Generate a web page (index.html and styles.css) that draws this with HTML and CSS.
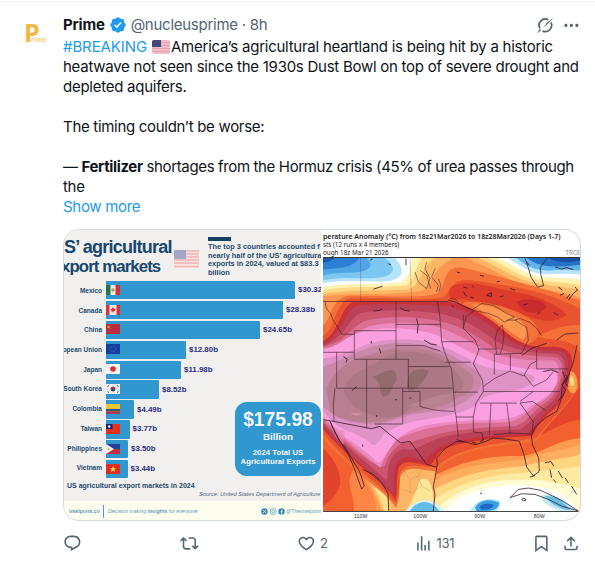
FILE: index.html
```html
<!DOCTYPE html>
<html lang="en">
<head>
    <meta charset="UTF-8">
    <meta name="viewport" content="width=device-width, initial-scale=1.0">
    <title>Prime on X</title>
    <link rel="stylesheet" href="styles.css">
</head>
<body>
    <article class="tweet">
        <div class="avatar"><span class="avatar-p">P</span><span class="avatar-rest">rime</span></div>
        <div class="tweet-main">
            <header class="tweet-header">
                <span class="name">Prime</span>
                <svg class="verified" viewBox="0 0 22 22"><path d="M20.396 11c-.018-.646-.215-1.275-.57-1.816-.354-.54-.852-.972-1.438-1.246.223-.607.27-1.264.14-1.897-.131-.634-.437-1.218-.882-1.687-.47-.445-1.053-.75-1.687-.882-.633-.13-1.29-.083-1.897.14-.273-.587-.704-1.086-1.245-1.44S11.647 1.62 11 1.604c-.646.017-1.273.213-1.813.568s-.969.854-1.24 1.44c-.608-.223-1.267-.272-1.902-.14-.635.13-1.22.436-1.69.882-.445.47-.749 1.055-.878 1.688-.13.633-.08 1.29.144 1.896-.587.274-1.087.705-1.443 1.245-.356.54-.555 1.17-.574 1.817.02.647.218 1.276.574 1.817.356.54.856.972 1.443 1.245-.224.606-.274 1.263-.144 1.896.13.634.433 1.218.877 1.688.47.443 1.054.747 1.687.878.633.132 1.29.084 1.897-.136.274.586.705 1.084 1.246 1.439.54.354 1.17.551 1.816.569.647-.016 1.276-.213 1.817-.567s.972-.854 1.245-1.44c.604.239 1.266.296 1.903.164.636-.132 1.22-.447 1.68-.907.46-.46.776-1.044.908-1.681s.075-1.299-.165-1.903c.586-.274 1.084-.705 1.439-1.246.354-.54.551-1.17.569-1.816zM9.662 14.85l-3.429-3.428 1.293-1.302 2.072 2.072 4.4-4.794 1.347 1.246z"/></svg>
                <span class="handle">@nucleusprime · 8h</span>
                <span class="header-actions">
                    <svg class="icon grok" viewBox="0 0 24 24"><path d="M15.8 4.9A8 8 0 0 0 5 15.8M8.300 19.100A8 8 0 0 0 19 8.200"/><path class="slash" d="M22.500 1.500L15.500 9.800 9 14.700 14.600 8.300zM1.500 22.500L4.700 16.500 6.800 18z"/></svg>
                    <svg class="icon" viewBox="0 0 24 24"><path d="M3 12c0-1.1.9-2 2-2s2 .9 2 2-.9 2-2 2-2-.9-2-2zm9 2c1.1 0 2-.9 2-2s-.9-2-2-2-2 .9-2 2 .9 2 2 2zm7 0c1.1 0 2-.9 2-2s-.9-2-2-2-2 .9-2 2 .9 2 2 2z"/></svg>
                </span>
            </header>

            <div class="tweet-text">
                <p class="lead"><a class="link">#BREAKING</a> <svg class="flag-emoji" viewBox="0 0 18 14"><rect width="18" height="14" rx="2" fill="#f3bcc6"/><path d="M0 2.500h18M0 5.500h18M0 8.500h18M0 11.500h18" stroke="#e2a3b2" stroke-width="1"/><path d="M2 0h7v7H0V2a2 2 0 0 1 2-2z" fill="#44487f"/></svg>America’s agricultural heartland is being hit by a historic</p>
                <p class="wide">heatwave not seen since the 1930s Dust Bowl on top of severe drought and</p>
                <p class="wide">depleted aquifers.</p>
                <br>
                <p>The timing couldn’t be worse:</p>
                <br>
                <p class="tight">— <b>Fertilizer</b> shortages from the Hormuz crisis (45% of urea passes through</p>
                <p>the</p>
                <p><a class="link">Show more</a></p>
            </div>

            <div class="media">
                <section class="chart">
                    <div class="chart-head">
                        <h2>S’ agricultural<span>xport markets</span></h2>
                        <svg class="chart-flag" viewBox="0 0 25 18"><rect width="25" height="18" fill="#f4e3e1"/><path d="M0 1h25M0 4h25M0 7h25M0 10h25M0 13h25M0 16.500h25" stroke="#efb5b3" stroke-width="1.300"/><rect width="12" height="9" fill="#a7a5c5"/></svg>
                        <div class="chart-note">The top 3 countries accounted f<br>nearly half of the US’ agricultura<br>exports in 2024, valued at $83.3<br>billion</div>
                    </div>

                    <div class="chart-body">
                        <div class="labels">
                            <span>Mexico</span>
                            <span>Canada</span>
                            <span>China</span>
                            <span>opean Union</span>
                            <span>Japan</span>
                            <span>South Korea</span>
                            <span>Colombia</span>
                            <span>Taiwan</span>
                            <span>Philippines</span>
                            <span>Vietnam</span>
                        </div>
                        <div class="bars">
                            <div class="row"><div class="bar" style="width: 189px"><svg viewBox="0 0 14 10"><rect width="14" height="10" fill="#eee"/><rect width="4.500" height="10" fill="#26734d"/><rect x="9.500" width="4.500" height="10" fill="#cf3339"/><circle cx="7" cy="5" r="1.700" fill="#a89565"/></svg></div>$30.32</div>
                            <div class="row"><div class="bar" style="width: 177px"><svg viewBox="0 0 14 10"><rect width="14" height="10" fill="#f6eeee"/><path d="M0 0h3.500v10H0zM10.500 0H14v10h-3.500zM7 2l1 1.500 1.500.5-1 2.500H7.300V8h-.6V6.500H5.500l-1-2.500L6 3.500z" fill="#db3236"/></svg></div>$28.38b</div>
                            <div class="row"><div class="bar" style="width: 154px"><svg viewBox="0 0 14 10"><rect width="14" height="10" fill="#b92d3d"/><circle cx="2.500" cy="3" r="1.200" fill="#d8a145"/><circle cx="5" cy="2" r=".4" fill="#d8a145"/><circle cx="5" cy="4.500" r=".4" fill="#d8a145"/></svg></div>$24.65b</div>
                            <div class="row"><div class="bar" style="width: 80px"><svg viewBox="0 0 14 10"><rect width="14" height="10" fill="#12409f"/><circle cx="7" cy="5" r="2.800" fill="none" stroke="#59719a" stroke-width=".8" stroke-dasharray="1 .6"/></svg></div>$12.80b</div>
                            <div class="row"><div class="bar" style="width: 75px"><svg viewBox="0 0 14 10"><rect width="14" height="10" fill="#f8f5f4"/><circle cx="7" cy="5" r="2.800" fill="#df2f31"/></svg></div>$11.98b</div>
                            <div class="row"><div class="bar" style="width: 53px"><svg viewBox="0 0 14 10"><rect width="14" height="10" fill="#eee"/><path d="M4.500 5a2.500 2.500 0 0 1 5 0z" fill="#b42f45"/><path d="M4.500 5a2.500 2.500 0 0 0 5 0z" fill="#27457f"/><path d="M1.500 2.500L3 1.500M11 1.500l1.500 1M1.500 7.500l1.500 1M11 8.500l1.500-1" stroke="#555"/></svg></div>$8.52b</div>
                            <div class="row"><div class="bar" style="width: 28px"><svg viewBox="0 0 14 10"><rect width="14" height="10" fill="#e9c634"/><rect y="5" width="14" height="2.500" fill="#44507c"/><rect y="7.500" width="14" height="2.500" fill="#a53b50"/></svg></div>$4.49b</div>
                            <div class="row"><div class="bar" style="width: 23.500px"><svg viewBox="0 0 14 10"><rect width="14" height="10" fill="#e5301e"/><rect width="6.500" height="5" fill="#19216f"/><circle cx="3.200" cy="2.500" r="1.200" fill="#fff"/></svg></div>$3.77b</div>
                            <div class="row"><div class="bar" style="width: 22px"><svg viewBox="0 0 14 10"><rect width="14" height="5" fill="#2b3d9e"/><rect y="5" width="14" height="5" fill="#c32b3f"/><path d="M0 0l8 5-8 5z" fill="#f5f2ea"/><circle cx="2.700" cy="5" r="1" fill="#e4bd4a"/></svg></div>$3.50b</div>
                            <div class="row"><div class="bar" style="width: 21.500px"><svg viewBox="0 0 14 10"><rect width="14" height="10" fill="#dc2f22"/><path d="M7 2l.8 2.200h2.300L8.300 5.600 9 8 7 6.600 5 8l.7-2.400-1.800-1.400h2.300z" fill="#f6e34b"/></svg></div>$3.44b</div>
                        </div>
                        <div class="total">
                            <strong>$175.98</strong>
                            <em>Billion</em>
                            <span>2024 Total US<br>Agricultural Exports</span>
                        </div>
                    </div>

                    <div class="chart-caption">US agricultural export markets in 2024</div>
                    <div class="chart-source">Source: United States Department of Agriculture</div>
                    <footer class="chart-foot">
                        <span class="brand">intelpoint.co</span>
                        <span class="motto">Decision making <b>insights</b> for everyone</span>
                        <svg class="socials" viewBox="0 0 24 7"><circle cx="3.500" cy="3.500" r="3.200" fill="#2c85b5"/><path d="M2 2l3 3M5 2L2 5" stroke="#fff" stroke-width=".8"/><rect x="9.500" y=".8" width="5.400" height="5.400" rx="1.500" fill="none" stroke="#6daecb" stroke-width=".9"/><circle cx="12.200" cy="3.500" r="1.300" fill="none" stroke="#6daecb" stroke-width=".8"/><circle cx="20.500" cy="3.500" r="3.200" fill="#2c85b5"/><path d="M21.800 2h-.6q-.6 0-.6.700V6.700M19.500 3.700h2" stroke="#fff" stroke-width=".8" fill="none"/></svg>
                        <span class="social-name">@Theintelpoint</span>
                    </footer>
                </section>

                <section class="forecast">
                    <div class="forecast-head">
                        <div class="forecast-title">perature Anomaly (°C) from 18z21Mar2026 to 18z28Mar2026 (Days 1-7)</div>
                        <div class="forecast-sub">sts (12 runs x 4 members)</div>
                        <div class="forecast-sub last"><span>ough 18z Mar 21 2026</span><span class="source">TROI</span></div>
                    </div>
                    <svg class="map" viewBox="9 98 771 762" preserveAspectRatio="none">
                        <rect x="9" y="98" width="771" height="762" fill="#fc9650"/>

                        <!-- cold air, north west -->
                        <path fill="#fdb566" d="M9 213C100 202 200 212 300 198C350 180 320 140 400 98H9z"/>
                        <path fill="#fed884" d="M9 206C90 192 180 200 268 192C310 170 300 130 345 98H9z"/>
                        <path fill="#fff3b4" d="M9 195C90 180 180 190 260 180C285 160 285 130 305 98H9z"/>
                        <path fill="#fff" d="M9 185C90 170 180 180 240 172C272 155 270 130 276 98H9z"/>
                        <path fill="#b5e3fa" d="M9 174C80 160 150 172 205 168C245 160 262 140 225 98H9z"/>
                        <path fill="#7cc6f2" d="M9 165C80 150 130 165 190 155C230 145 225 120 195 98H9z"/>
                        <path fill="#4fa5e8" d="M9 150C50 140 90 145 130 138C165 125 150 110 140 98H9z"/>
                        <path fill="#2c7fd2" d="M9 133C50 128 100 130 118 98H9z"/>
                        <path fill="#1b58b1" d="M9 112Q30 110 45 98H9z"/>

                        <!-- cold air, north east -->
                        <path fill="#fdb566" d="M440 98C520 130 560 165 620 180C680 198 740 200 780 218V98z"/>
                        <path fill="#fed884" d="M475 98C540 125 580 160 640 172C700 184 740 184 780 196V98z"/>
                        <path fill="#fff3b4" d="M505 98C570 128 600 155 650 164C710 172 740 170 780 180V98z"/>
                        <path fill="#fff" d="M535 98C580 120 620 148 660 154C710 160 750 156 780 164V98z"/>
                        <path fill="#b5e3fa" d="M565 98C605 125 635 144 670 146C710 148 740 142 780 148V98z"/>
                        <path fill="#5fb4ec" d="M590 98C625 130 660 138 700 135C730 132 750 133 780 136V98z"/>
                        <path fill="#2872c6" d="M622 98C650 122 690 130 780 118V98z"/>
                        <path fill="#1a4fa6" d="M685 98Q720 118 780 106V98z"/>

                        <!-- southern waters -->
                        <path fill="#fc9a50" d="M9 560H780V860H9z"/>
                        <path fill="#f4602f" d="M9 590C70 650 110 700 140 780C150 810 140 830 150 860H9z"/>
                        <path fill="#fb8545" d="M100 735C140 760 165 810 170 860H100C110 820 70 780 100 735z"/>
                        <path fill="#e2432b" d="M9 670C40 700 65 740 60 780C50 815 30 830 9 845z"/>
                        <path fill="#fdb968" d="M140 735C190 760 225 820 235 860H185C175 820 140 770 140 735z"/>
                        <path fill="#fee08d" d="M160 765C190 780 205 820 208 860H192C190 830 160 800 160 765z"/>
                        <path fill="#f2622f" d="M345 690C400 650 560 640 640 640C690 600 720 560 780 540V640C700 650 660 690 600 695C500 690 420 715 350 750z"/>
                        <path fill="#e5452c" d="M645 640C660 590 700 565 780 480V585C730 590 690 620 645 640z"/>
                        <path fill="#fdae5f" d="M342 770C420 720 520 715 610 705C680 680 730 680 780 660V860H340z"/>
                        <path fill="#fed681" d="M342 795C420 750 520 730 610 725C680 705 730 705 780 690V860H340z"/>
                        <path fill="#feeaa0" d="M342 825C420 775 500 750 610 745C680 735 730 735 780 725V860H340z"/>
                        <path fill="#fffbd3" d="M355 850C420 790 500 765 610 765C680 765 730 780 780 790V860H355z"/>
                        <path fill="#fff" d="M375 860C420 800 520 780 600 782C680 788 740 800 772 860z"/>
                        <path fill="#fdb566" d="M235 730C265 715 310 725 345 730V860H225z"/>
                        <path fill="#fee698" d="M300 765C330 755 340 780 342 860H260C275 830 290 800 300 765z"/>
                        <path fill="#d8f1f8" d="M255 860C290 820 340 815 372 860z"/>
                        <path fill="#62bdea" d="M270 860C290 825 335 825 358 860z"/>
                        <path fill="#bfe8f6" d="M450 860C470 820 510 820 540 828Q545 850 530 860z"/>
                        <path fill="#3b9fe3" d="M465 850C480 820 520 825 538 835Q535 860 500 860H470z"/>
                        <path fill="#1f68c4" d="M478 848Q495 830 522 842Q515 858 485 856z"/>
                        <path fill="#bfe8f6" d="M660 815C700 800 740 830 765 860H720C700 850 670 840 660 815z"/>
                        <path fill="#66c0e6" d="M675 815C710 810 740 840 752 858C720 855 690 840 675 815z"/>

                        <!-- heat dome, outer to inner -->
                        <path fill="#f47038" d="M9 300C35 290 30 215 90 212C200 210 290 222 350 205C385 185 360 110 440 130C520 150 640 180 780 225V480C750 540 680 600 650 650C560 665 420 660 350 740C300 740 260 715 240 760C240 800 235 840 228 850C190 790 110 760 9 640z"/>
                        <path fill="#e9532f" d="M9 335C50 305 45 225 95 218C200 216 300 228 370 216C400 190 395 160 450 165C560 180 660 190 780 250V300C720 300 680 320 650 335C720 350 780 340 780 400V480C750 530 680 600 650 640C560 655 420 660 348 728C300 730 260 705 238 750C240 790 232 830 226 838C190 780 90 730 9 625z"/>
                        <path fill="#dd3b2b" d="M400 180C440 165 500 180 560 195C640 205 720 240 740 270C700 300 640 285 600 262C540 240 450 220 395 222C385 205 385 190 400 180z"/>
                        <path fill="#c92a2d" d="M590 230C620 215 670 222 680 245C660 272 610 270 590 230z"/>
                        <path fill="#f4713a" d="M430 232C500 225 590 250 640 290C670 325 650 350 615 362C570 345 520 300 430 255z"/>
                        <path fill="#fc9650" d="M455 238C510 235 570 262 610 295C625 315 620 335 610 345C570 325 520 275 455 238z"/>
                        <path fill="#fca04f" d="M735 440C760 430 775 450 772 490C760 520 740 510 735 440z"/>
                        <path fill="#fede87" d="M748 455Q765 450 762 480Q750 495 748 455z"/>
                        <path fill="#c6313a" d="M9 350C65 315 60 238 105 229H385C440 235 500 270 550 315C590 350 630 372 700 365C745 365 765 390 752 430C748 480 735 530 690 562C660 590 645 620 635 635C560 635 420 650 375 672C340 695 345 715 330 722C290 720 260 700 238 725C225 760 235 800 226 825C190 770 100 720 9 612z"/>
                        <path fill="#bb4158" d="M9 357C75 325 75 243 120 240C200 236 300 236 385 244C440 252 500 288 545 330C590 362 640 380 700 376C740 376 748 400 742 430C738 480 728 530 685 556C650 590 635 615 620 628C540 628 420 640 370 662C335 680 325 712 300 708C270 690 240 695 225 725C215 760 226 790 222 808C180 765 100 710 9 604z"/>
                        <path fill="#cc566f" d="M9 362C85 335 85 270 130 262C200 250 300 256 370 268C430 280 480 310 530 350C590 378 650 386 700 386C730 388 738 410 732 440C728 480 715 525 670 552C640 580 620 605 600 615C520 615 430 622 360 640C310 655 290 680 262 675C235 670 220 690 208 715C200 740 205 760 200 770C170 735 100 690 9 595z"/>
                        <path fill="#dc6f95" d="M9 366C85 350 92 300 145 285C220 270 300 274 365 290C420 303 470 330 520 368C585 390 645 394 700 396C725 398 730 420 725 448C718 486 700 525 660 545C630 575 610 598 585 604C510 608 430 610 355 628C300 643 275 655 248 655C225 665 205 690 195 722C180 740 110 690 9 590z"/>
                        <path fill="#ec88c0" d="M9 370C90 358 95 325 150 303C220 288 300 290 360 308C410 325 460 355 510 384C580 404 640 408 700 410C718 412 718 435 712 460C705 495 685 525 650 538C615 570 595 588 565 592C500 596 430 592 350 606C290 618 255 632 230 645C208 670 198 690 182 730C160 712 100 670 9 582z"/>
                        <path fill="#faa0e0" d="M9 376C60 362 80 335 110 325C180 303 250 305 335 325C400 352 440 380 480 394C520 412 580 430 645 434C700 425 716 440 712 470C695 520 650 530 625 550C600 580 560 585 500 586C430 588 370 590 300 606C260 618 230 640 215 665C195 690 190 705 176 716C150 690 110 660 66 630C40 605 25 590 9 578z"/>
                        <path fill="#de92c6" d="M9 400C60 395 80 378 110 372C160 345 230 338 300 346C370 360 420 388 470 415C510 440 590 432 630 450C660 455 640 485 590 495C540 510 500 500 475 535C440 565 380 575 310 585C250 595 215 610 190 630C175 655 165 670 152 655C120 630 80 620 55 605C35 590 20 570 9 560z"/>
                        <path fill="#c988a8" d="M9 425C60 410 90 388 130 375C180 355 240 350 300 358C370 372 410 398 450 425C485 445 495 470 475 495C450 530 400 555 330 562C260 568 215 590 180 600C120 600 60 590 9 545z"/>
                        <path fill="#b97f90" d="M20 490C40 440 90 400 145 392C190 372 250 362 310 372C370 385 410 415 445 440C470 460 465 490 435 510C400 520 390 545 330 552C260 560 220 590 165 592C110 595 60 590 30 560z"/>
                        <path fill="#ad7885" d="M70 500C80 440 150 430 205 390C260 370 340 380 380 415C420 445 440 475 425 495C390 505 370 520 310 530C270 545 260 575 200 580C150 575 130 560 100 545z"/>
                        <path fill="#b98391" d="M255 545C300 530 370 500 400 510C370 540 300 545 255 545z"/>
                        <path fill="#946a6f" d="M155 455C175 455 190 435 215 435C235 440 235 465 220 480C218 500 200 520 188 515C170 490 195 480 155 455zM268 450C280 430 315 430 326 438C322 460 285 500 268 498C255 485 262 465 268 450z"/>
                        <path fill="#e58bb8" d="M590 415q60-15 115-8q10 12-20 18q-50 5-95-10zM35 605l40 15-5 40q-30-20-35-55z" opacity=".6"/>
                        <path fill="#dba0c0" d="M90 568q20-8 35 0q-10 8-35 0z" opacity=".6"/>

                        <!-- borders -->
                        <g class="borders">
                            <path d="M9 229H385M228 229V403M352 229l4 20 4 30 5 71H460M228 298H362M228 362h85l20 8 28 8M103 317H228M103 317V403H265V490M9 382H103M50 382V490M140 403V612M50 490H398M265 425H388M248 490V598H165M248 500H300V545l30 8 30 5 42 2M15 229l4 20 12 15 10 25 14 20 10 18 38 1M365 350l8 30 10 25 12 30 5 55 5 70 3 12 7 65M375 412H452M401 502H475M408 577H460M475 372H530M523 388V450M523 388L605 385M571 388V435M650 375V432H745M490 500H720M480 535H590M513 535L508 630M560 535l8 60 2 32M600 535l18 25 22 32-5 35M520 630L570 625 632 628M600 535l38-5 40 28M640 500l-40 30M430 270v40l35 35 12 30-17 42 28 50 2 33-22 35-8 42v45l26 3 3 25M490 485l35-25 46-22 40 15 20-35 19-10M612 450l28 35 40-20 20-25M45 490l-5 50 2 50"/>
                            <path class="faint" d="M122 98V229M270 98l5 131"/>
                        </g>
                        <g class="coast">
                            <path d="M9 585l31 5 115 22 25-7 30 25 32 25 28-5 50 70 30 8M340 860l5-50-5-22 12-68-2-20 25-28 35-22 30 2 10 5 18 3 30-10 22-10 40 4 38 6 14 40 8 38 20 26 18-14-2-40-18-38-4-28 12-28 32-28 32-18 12-30 5-48 20-34 14-40 10-48M30 590l15 35 18 30 22 35 18 42 22 62 8-10-14-42-24-40-20-35-15-15zM130 735l30 15 24 22 20 35 2 53M570 820l25-25 30-4 35 6 30 14 40 20 45 29-50-15-40-20-40-15-40-2zM615 98l10 30 8 28 20 30 18-5-8-30-2-25 20-28M385 225l20 5 25 12 25 12M605 392l30-22 45-15M710 345l25-18 40-3"/>
                            <path class="lakes" d="M455 255l30-20 35 5 35 22 28 14-30 15-20-15-30-12zM530 388l-5-45 8-28 14-15 5 30-5 38-7 20M560 285l25 0 35 22 5 38-20 40M585 285l15-5 30 12 20 18 15 22M430 310l8-35 25-18M285 140l10 30 25 20 10-30-15-30 5-20M300 135l20 15 12 40M345 130l-10 25 20 25-5 20M355 160l8 20-6 18M390 220l15 2 10 8"/>
                            <path class="islands" d="M675 715l18-4 8 14M690 735l5 25M715 740l12 20M735 760l10 15M755 785l15 25M700 765l8 10M630 758l15-5M160 192l15-5 12-4M430 185l12 4M500 210l14-8v12zM570 190l15 5M410 140l10 3M540 215l10-3M610 240l12-4M660 260l-8 8M700 262l14 8M740 220l10-14M620 110l8 10M205 115l8 4M150 105l8-4M258 100v20M450 215l12 4M480 150l12 3M705 125l20 6 15-4 20 6M715 185l12 10M720 210l12-5M745 225l15-20 14-12M765 185l8 10M728 440l8 22-10 18 10 16-8 18-14 14M735 450l8 6-6 20 8 10M670 440l25-5 20 8M160 258l18-2 10-5M240 248l15 8 15 2M290 280l4 20-2 25M312 345l20 12 18 3M70 395l12 8-4 10M110 485l-14 12M154 348v8M178 370l4 14M225 525h6M268 520h6M170 577v-6M605 825l8-4 5 6-8 2zM480 805l6 4M410 645l20 6M455 652l14 4M480 652l12-8M430 200l10 14M455 180l8 8M530 170l10-2M395 240l6 6M128 660v6"/>
                        </g>
                        <path class="mexico" d="M250 740l20 25 25-10 10 30-30 20-30-10M305 785l25 15M270 765v45M295 755l10-20"/>
                    </svg>
                    <div class="axis"><span>110W</span><span>100W</span><span>90W</span><span>80W</span></div>
                </section>
            </div>

            <div class="actions">
                <span class="action"><svg class="icon" viewBox="0 0 24 24"><path d="M1.751 10c0-4.42 3.584-8 8.005-8h4.366c4.49 0 8.129 3.64 8.129 8.13 0 2.96-1.607 5.68-4.196 7.11l-8.054 4.46v-3.69h-.067c-4.49.1-8.183-3.51-8.183-8.01zm8.005-6c-3.317 0-6.005 2.69-6.005 6 0 3.37 2.77 6.08 6.138 6.01l.351-.01h1.761v2.300l5.087-2.810c1.951-1.080 3.163-3.130 3.163-5.360 0-3.390-2.744-6.130-6.129-6.130H9.756z"/></svg></span>
                <span class="action"><svg class="icon" viewBox="0 0 24 24"><path d="M4.500 3.880l4.432 4.140-1.364 1.460L5.500 7.550V16c0 1.100.896 2 2 2H13v2H7.500c-2.209 0-4-1.790-4-4V7.550L1.432 9.480.068 8.020 4.500 3.880zM16.500 6H11V4h5.500c2.209 0 4 1.790 4 4v8.450l2.068-1.930 1.364 1.460-4.432 4.140-4.432-4.140 1.364-1.460 2.068 1.930V8c0-1.100-.896-2-2-2z"/></svg></span>
                <span class="action"><svg class="icon" viewBox="0 0 24 24"><path d="M16.697 5.500c-1.222-.060-2.679.510-3.890 2.160l-.805 1.090-.806-1.090C9.984 6.010 8.526 5.440 7.304 5.500c-1.243.070-2.349.780-2.910 1.910-.552 1.120-.633 2.780.479 4.820 1.074 1.970 3.257 4.270 7.129 6.610 3.870-2.340 6.052-4.640 7.126-6.610 1.111-2.040 1.030-3.700.477-4.820-.561-1.130-1.666-1.840-2.908-1.910zm4.187 7.690c-1.351 2.480-4.001 5.120-8.379 7.670l-.503.300-.504-.300c-4.379-2.550-7.029-5.190-8.382-7.670-1.360-2.500-1.410-4.860-.514-6.670.887-1.790 2.647-2.910 4.601-3.010 1.651-.090 3.368.560 4.798 2.010 1.429-1.450 3.146-2.100 4.796-2.010 1.954.100 3.714 1.220 4.601 3.010.896 1.810.846 4.170-.514 6.670z"/></svg>2</span>
                <span class="action views"><svg class="icon" viewBox="0 0 24 24"><path d="M8.750 21V3h2v18h-2zM18 21V8.500h2V21h-2zM4 21l.004-10h2L6 21H4zm9.248 0v-7h2v7h-2z"/></svg>131</span>
                <span class="action"><svg class="icon" viewBox="0 0 24 24"><path d="M4 4.500C4 3.120 5.119 2 6.500 2h11C18.881 2 20 3.120 20 4.500v18.440l-8-5.710-8 5.710V4.500zM6.500 4c-.276 0-.500.220-.500.500v14.560l6-4.290 6 4.290V4.500c0-.280-.224-.500-.500-.500h-11z"/></svg></span>
                <span class="action"><svg class="icon" viewBox="0 0 24 24"><path d="M12 2.590l5.700 5.700-1.410 1.420L13 6.410V16h-2V6.410l-3.300 3.300-1.410-1.420L12 2.590zM21 15l-.020 3.510c0 1.380-1.120 2.490-2.500 2.490H5.500C4.110 21 3 19.880 3 18.500V15h2v3.500c0 .280.220.500.500.500h12.980c.280 0 .500-.220.500-.500L19 15h2z"/></svg></span>
            </div>
        </div>
    </article>
</body>
</html>
```

FILE: styles.css
```css
body {
    margin: 0;
    background-color: #fff;
    color: #0f1419;
    font-family: Inter, "Liberation Sans", sans-serif;
    font-size: 15px;
    line-height: 20px;
}
p, h2 {
    margin: 0;
}
.tweet {
    display: flex;
    height: 549px;
    margin-top: 1px;
    padding: 13px 14px 0 16px;
    border-top: 1px solid #eff3f4;
    overflow: hidden;
}
.avatar {
    display: flex;
    align-items: flex-end;
    flex: none;
    width: 39px;
    height: 29px;
    padding-left: 8px;
    box-sizing: border-box;
    margin-right: 8px;
    color: #f3b83f;
    font-family: "Open Sans", sans-serif;
}
.avatar-p {
    font-size: 25px;
    font-weight: bold;
    line-height: 24px;
    width: 14px;
    letter-spacing: -2px;
}
.avatar-rest {
    margin-left: -7px;
    font-size: 6.5px;
    font-weight: bold;
    line-height: 8px;
    color: #f5cf7c;
}
.tweet-main {
    width: 518px;
    flex: none;
}
.tweet-header {
    display: flex;
    align-items: center;
    height: 20px;
}
.name {
    font-weight: bold;
    letter-spacing: -0.2px;
}
.verified {
    width: 18px;
    height: 18px;
    margin: 0 4px;
    fill: #1d9bf0;
}
.handle {
    color: #536471;
    letter-spacing: -0.26px;
}
.header-actions {
    display: flex;
    gap: 8px;
    margin-left: auto;
}
.icon {
    width: 18.75px;
    height: 18.75px;
    fill: #536471;
}
.grok {
    fill: none;
    stroke: #536471;
    stroke-width: 2.2;
}
.grok .slash {
    fill: #536471;
    stroke: none;
}
.tweet-text {
    margin-top: 2px;
    letter-spacing: -0.3px;
    white-space: nowrap;
}
.tweet-text br {
    line-height: 20px;
}
.lead {
    letter-spacing: -0.25px;
}
.lead .link {
    letter-spacing: -0.1px;
}
.wide {
    letter-spacing: -0.26px;
}
.tight {
    letter-spacing: -0.36px;
}
.link {
    color: #1d9bf0;
}
.flag-emoji {
    width: 18px;
    height: 14px;
    margin: 0 1px;
    vertical-align: -2px;
}

/* media */
.media {
    display: flex;
    gap: 2px;
    height: 290px;
    margin-top: 12px;
    border: 1px solid #cfd9de;
    border-radius: 16px;
    overflow: hidden;
    width: 516px;
    font-family: "Liberation Sans", Arial, sans-serif;
    letter-spacing: 0;
    white-space: nowrap;
}
.chart, .forecast {
    width: 257px;
    flex: none;
    overflow: hidden;
}
.chart {
    background-color: #f1f0ee;
    color: #1f4a6c;
}
.chart-head {
    display: flex;
    height: 51px;
}
.chart h2 {
    flex: none;
    width: 110px;
    margin-top: 7px;
    font-size: 18px;
    line-height: 20px;
    letter-spacing: -0.75px;
    color: #17476f;
}
.chart h2 span {
    display: block;
    margin-left: -3px;
    font-size: 16.8px;
    letter-spacing: -0.9px;
}
.chart-flag {
    flex: none;
    width: 25px;
    height: 18px;
    margin-top: 20px;
}
.chart-note {
    flex: none;
    margin-left: 9px;
    margin-top: 7px;
    font-size: 7.4px;
    font-weight: bold;
    line-height: 8.7px;
}
.chart-note::before {
    content: "";
    display: block;
    width: 23px;
    height: 4px;
    margin-bottom: 2px;
    background-color: #173f64;
}
.chart-body {
    display: flex;
    height: 200px;
    position: relative;
}
.labels {
    display: flex;
    flex-direction: column;
    align-items: flex-end;
    width: 38px;
    margin-right: 4px;
}
.labels span {
    height: 19.7px;
    font-size: 6.5px;
    font-weight: bold;
    line-height: 19px;
}
.row {
    display: flex;
    align-items: center;
    gap: 3px;
    height: 18.3px;
    margin-bottom: 1.6px;
    font-size: 7.9px;
    font-weight: bold;
    color: #2b2d86;
}
.bar {
    display: flex;
    align-items: center;
    flex: none;
    height: 18.3px;
    background-color: #3197cf;
    border-radius: 0 1px 1px 0;
}
.bar svg {
    width: 14px;
    height: 10px;
    margin-bottom: 1px;
}
/* total card lies over the bars */
.total {
    position: absolute;
    right: 0;
    bottom: 5px;
    width: 86px;
    height: 74px;
    border-radius: 12px;
    background-color: #3197cf;
    color: #f3f9fc;
    font-weight: bold;
    text-align: center;
}
.total strong {
    display: block;
    margin-top: 7px;
    font-size: 19.3px;
    line-height: 21px;
}
.total em {
    display: block;
    font-size: 9.8px;
    font-style: normal;
    line-height: 14px;
}
.total span {
    display: block;
    margin-top: 4px;
    font-size: 7.8px;
    line-height: 9px;
}
.chart-caption {
    margin: 1px 0 0 3px;
    font-size: 7px;
    font-weight: bold;
    line-height: 8px;
}
.chart-source {
    margin-left: 135px;
    font-size: 5.7px;
    font-style: italic;
    line-height: 9px;
    color: #4f6880;
}
.chart-foot {
    display: flex;
    align-items: center;
    height: 20px;
    margin-top: 2px;
    background-color: #fefef0;
    color: #5e9bb8;
    font-size: 5.2px;
    line-height: 10px;
}
.brand {
    width: 34px;
    padding-left: 5px;
    font-weight: bold;
    border-right: 1px solid #4fa0c0;
    line-height: 13px;
}
.motto {
    width: 153px;
    padding-left: 4px;
    font-style: italic;
}
.socials {
    flex: none;
    width: 24px;
    height: 7px;
}
.social-name {
    margin-left: 1px;
}

.forecast-head {
    height: 27px;
    border-bottom: 1px solid #333;
    font-family: "Noto Sans", "Open Sans", sans-serif;
    color: #222;
}
.forecast-title {
    padding-top: 2px;
    font-size: 6.95px;
    font-weight: 600;
    line-height: 9px;
}
.forecast-sub {
    font-size: 6.3px;
    line-height: 8px;
}
.forecast-sub.last {
    display: flex;
}
.source {
    margin-left: auto;
    font-size: 6.3px;
    color: #888;
}
.map {
    display: block;
    width: 257px;
    height: 254px;
    border-bottom: 1px solid #444;
    box-sizing: border-box;
}
.borders, .coast {
    fill: none;
    stroke: #3a1c2a;
    stroke-width: 1.8;
}
.borders .faint {
    opacity: 0.4;
}
.coast {
    stroke-width: 2.4;
}
.lakes {
    stroke-width: 1.6;
}
.islands {
    stroke-width: 2.6;
}
.mexico {
    fill: none;
    stroke: #a98a5a;
    stroke-width: 1.5;
    opacity: 0.6;
}
.axis {
    display: flex;
    padding-left: 8px;
    font-size: 5.3px;
    line-height: 9px;
    color: #333;
}
.axis span {
    width: 59.5px;
    text-align: center;
}

.actions {
    display: grid;
    grid-template-columns: 117.3px 117px 115.5px 1fr 30px 18px;
    margin-top: 13px;
    margin-right: 1px;
    color: #536471;
    font-size: 13px;
    line-height: 18.75px;
}
.action {
    display: flex;
    align-items: center;
    gap: 4px;
}
.views {
    letter-spacing: -0.3px;
    padding-left: 1px;
}
```
